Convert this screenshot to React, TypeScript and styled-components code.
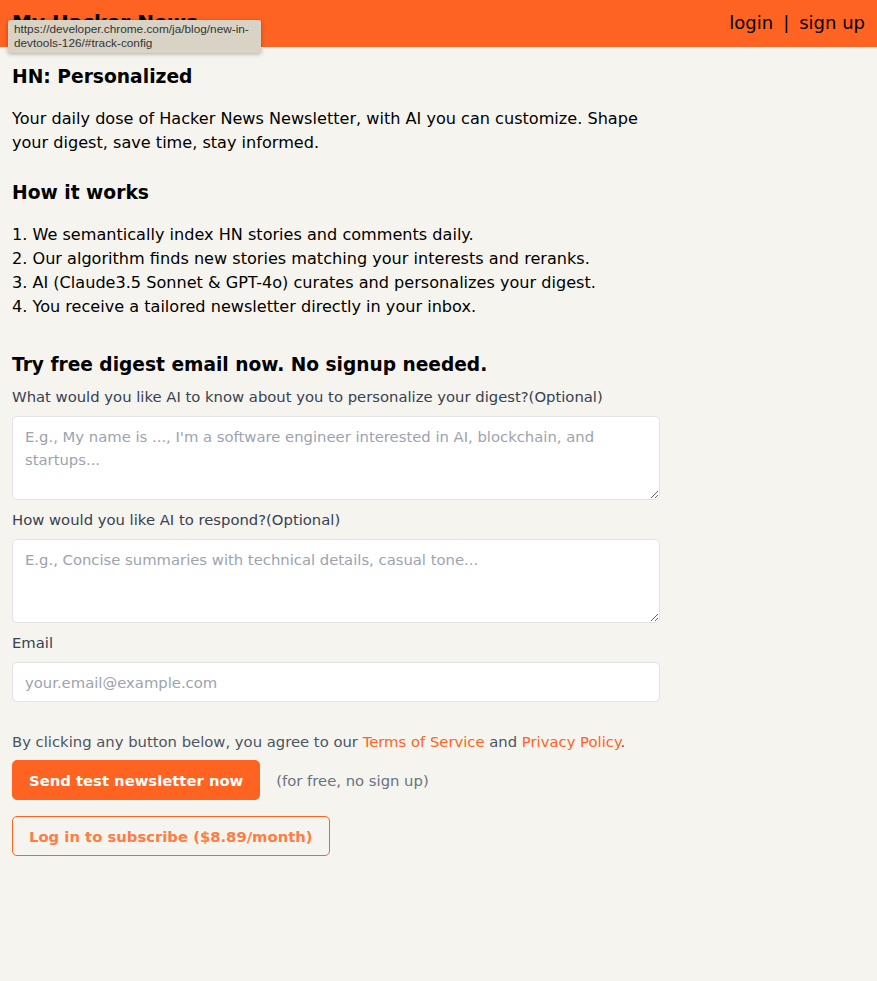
import styled, { createGlobalStyle } from "styled-components";

const GlobalStyle = createGlobalStyle`
  html, body {
    margin: 0;
    padding: 0;
    background: #f5f4ee;
  }
  body {
    font-family: "DejaVu Sans", Verdana, sans-serif;
    color: #000;
  }
`

const orange = '#ff6321'
// the small text in the shot runs a bit wider than 14px DejaVu
const small = '14.8px'

export default function App() {
  return (
    <Page>
      <GlobalStyle />
      <Header>
        <Brand>My Hacker News</Brand>
        <AuthLinks>
          <span>login</span>
          <span>|</span>
          <span>sign up</span>
        </AuthLinks>
        <LinkTip>https://developer.chrome.com/ja/blog/new-in-devtools-126/#track-config</LinkTip>
      </Header>

      <Main>
        <Title>HN: Personalized</Title>
        <Intro>
          Your daily dose of Hacker News Newsletter, with AI you can customize. Shape
          your digest, save time, stay informed.
        </Intro>

        <Subtitle>How it works</Subtitle>
        <Steps>
          <li>1. We semantically index HN stories and comments daily.</li>
          <li>2. Our algorithm finds new stories matching your interests and reranks.</li>
          <li>3. AI (Claude3.5 Sonnet &amp; GPT-4o) curates and personalizes your digest.</li>
          <li>4. You receive a tailored newsletter directly in your inbox.</li>
        </Steps>

        <FormTitle>Try free digest email now. No signup needed.</FormTitle>
        <Form onSubmit={e => e.preventDefault()}>
          <Field>
            <Label>What would you like AI to know about you to personalize your digest?(Optional)</Label>
            <TextArea placeholder="E.g., My name is ..., I'm a software engineer interested in AI, blockchain, and startups..." />
          </Field>
          <Field>
            <Label>How would you like AI to respond?(Optional)</Label>
            <TextArea placeholder="E.g., Concise summaries with technical details, casual tone..." />
          </Field>
          <Field>
            <Label>Email</Label>
            <Input type="email" placeholder="your.email@example.com" />
          </Field>
        </Form>

        <Agree>
          By clicking any button below, you agree to our <Link>Terms of Service</Link> and <Link>Privacy Policy</Link>.
        </Agree>
        <ButtonRow>
          <Button>Send test newsletter now</Button>
          <Note>(for free, no sign up)</Note>
        </ButtonRow>
        <ButtonRow>
          <Button $outline>Log in to subscribe ($8.89/month)</Button>
        </ButtonRow>
      </Main>
    </Page>
  )
}

const Page = styled.div`
  min-height: 981px;
`

const Header = styled.header`
  position: relative;
  height: 47px;
  background: ${orange};
  display: flex;
  align-items: center;
  justify-content: space-between;
  padding: 0 12px;
  box-sizing: border-box;
`

const Brand = styled.div`
  font-size: 20px;
  font-weight: bold;
  color: #000;
  margin-top: -4px;
`

const AuthLinks = styled.div`
  display: flex;
  gap: 10px;
  font-size: 18px;
  color: #000;
  margin-top: -2px;
`

const LinkTip = styled.div`
  position: absolute;
  left: 8px;
  top: 20px;
  width: 253px;
  box-sizing: border-box;
  padding: 2px 6px 3px;
  background: #d9d3c5;
  color: #333;
  font-family: "Liberation Sans", Arial, sans-serif;
  font-size: 11.8px;
  line-height: 14px;
  border-radius: 2px;
  box-shadow: 0 1px 4px rgba(0,0,0,.3);
  word-break: break-word;
`

const Main = styled.main`
  width: 648px;
  padding: 18px 12px 40px;
`

const Title = styled.h1`
  font-size: 18.7px;
  font-weight: bold;
  margin: 0 0 18px;
  line-height: 24px;
`

const Intro = styled.p`
  font-size: 16.1px;
  line-height: 24px;
  margin: 0 0 26px;
`

const Subtitle = styled.h2`
  font-size: 18.7px;
  font-weight: bold;
  line-height: 24px;
  margin: 0 0 18px;
`

const Steps = styled.ol`
  list-style: none;
  padding: 0;
  margin: 0 0 34px;
  font-size: 16.1px;
  line-height: 24px;
`

const FormTitle = styled.h2`
  font-size: 18.6px;
  font-weight: bold;
  line-height: 24px;
  margin: 0 0 10px;
`

const Form = styled.form`
  display: flex;
  flex-direction: column;
  gap: 10px;
`

const Field = styled.div`
  display: flex;
  flex-direction: column;
  gap: 9px;
`

const Label = styled.label`
  font-size: ${small};
  line-height: 20px;
  color: #374151;
`

const inputBase = `
  width: 100%;
  box-sizing: border-box;
  border: 1px solid #e2e3e6;
  border-radius: 5px;
  background: #fff;
  font-family: "DejaVu Sans", Verdana, sans-serif;
  font-size: ${small};
  color: #111;
  outline: none;
  padding: 9px 12px;
  &::placeholder {
    color: #9ca3af;
  }
`

const TextArea = styled.textarea`
  ${inputBase}
  height: 84px;
  line-height: 23px;
  padding-top: 8px;
  resize: vertical;
`

const Input = styled.input`
  ${inputBase}
  height: 40px;
`

const Agree = styled.p`
  margin: 30px 0 8px;
  font-size: ${small};
  line-height: 20px;
  color: #4b5563;
`

const Link = styled.a`
  color: ${orange};
  cursor: pointer;
`

const ButtonRow = styled.div`
  display: flex;
  align-items: center;
  gap: 16px;
  margin-bottom: 16px;
`

const Button = styled.button<{ $outline?: boolean }>`
  height: 40px;
  padding: 0 16px;
  border-radius: 5px;
  font-family: "DejaVu Sans", Verdana, sans-serif;
  font-size: ${small};
  font-weight: bold;
  cursor: pointer;
  border: 1px solid ${orange};
  background: ${p => p.$outline ? 'transparent' : orange};
  color: ${p => p.$outline ? '#ff7d45' : '#fff'};
`

const Note = styled.span`
  font-size: ${small};
  color: #6b7280;
`
